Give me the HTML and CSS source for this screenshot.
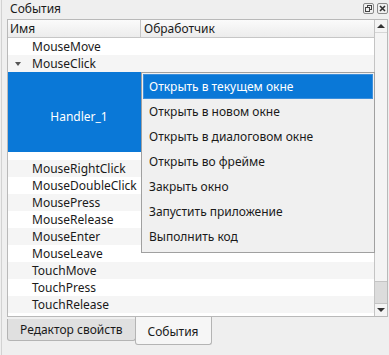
FILE: index.html
```html
<!DOCTYPE html>
<html lang="ru">
<head>
    <meta charset="UTF-8">
    <title>События</title>
    <link rel="stylesheet" href="styles.css">
</head>
<body>
    <div class="dock">
        <div class="dock-title">
            <span class="dock-caption">События</span>
            <div class="dock-buttons">
                <svg class="dock-btn" width="11" height="11" viewBox="0 0 11 11">
                    <rect x="0.5" y="0.5" width="10" height="10" rx="1.5" fill="none" stroke="#8a8a8a"/>
                    <rect x="4.5" y="2.5" width="4" height="4" fill="none" stroke="#444"/>
                    <rect x="2.5" y="4.5" width="4" height="4" fill="#efefef" stroke="#444"/>
                </svg>
                <svg class="dock-btn" width="11" height="11" viewBox="0 0 11 11">
                    <rect x="0.5" y="0.5" width="10" height="10" rx="1.5" fill="none" stroke="#8a8a8a"/>
                    <path d="M3 3 L8 8 M8 3 L3 8" stroke="#333" stroke-width="1.6"/>
                </svg>
            </div>
        </div>

        <div class="frame">
            <div class="tree">
                <div class="tree-header">
                    <div class="col-name">Имя</div>
                    <div class="col-handler">Обработчик</div>
                </div>
                <div class="row">MouseMove</div>
                <div class="row alt"><span class="arrow"></span>MouseClick</div>
                <div class="row handler-row">
                    <div class="handler-editor">Handler_1</div>
                </div>
                <div class="row alt">MouseRightClick</div>
                <div class="row">MouseDoubleClick</div>
                <div class="row alt">MousePress</div>
                <div class="row">MouseRelease</div>
                <div class="row alt">MouseEnter</div>
                <div class="row">MouseLeave</div>
                <div class="row alt">TouchMove</div>
                <div class="row">TouchPress</div>
                <div class="row alt">TouchRelease</div>
                <div class="row"></div>
            </div>
            <div class="scrollbar">
                <div class="sb-button"><span class="sb-up"></span></div>
                <div class="sb-track"><div class="sb-thumb"></div></div>
                <div class="sb-button"><span class="sb-down"></span></div>
            </div>

            <div class="menu">
                <div class="menu-item active">Открыть в текущем окне</div>
                <div class="menu-item">Открыть в новом окне</div>
                <div class="menu-item">Открыть в диалоговом окне</div>
                <div class="menu-item">Открыть во фрейме</div>
                <div class="menu-item">Закрыть окно</div>
                <div class="menu-item">Запустить приложение</div>
                <div class="menu-item">Выполнить код</div>
            </div>
        </div>

        <div class="tabs">
            <div class="tab">Редактор свойств</div>
            <div class="tab current">События</div>
        </div>
    </div>
</body>
</html>
```

FILE: styles.css
```css
body {
    margin: 0;
    padding-left: 1px;
    width: 388px;
    height: 355px;
    overflow: hidden;
    background-color: #efefef;
    font-family: "Noto Sans", sans-serif;
    font-size: 12px;
    color: #1a1a1a;
}

.dock {
    height: 355px;
    border-left: 1px solid #d2d2d2;
    padding: 0 1px 0 5px;
    display: flex;
    flex-direction: column;
}

.dock-title {
    height: 19px;
    display: flex;
    align-items: flex-start;
    justify-content: space-between;
}

.dock-caption {
    padding: 1px 0 0 3px;
    line-height: 16px;
}

.dock-buttons {
    display: flex;
    gap: 3px;
    padding-top: 3px;
}

.dock-btn {
    display: block;
}

.frame {
    position: relative;
    height: 296px;
    border: 1px solid #b9b9b9;
    background-color: white;
    display: flex;
}

.tree {
    flex: 1;
    overflow: hidden;
}

.tree-header {
    height: 17px;
    display: flex;
    background: linear-gradient(#fbfbfb, #ececec);
    border-bottom: 1px solid #c6c6c6;
    line-height: 17px;
}

.col-name {
    width: 130px;
    padding-left: 2px;
    border-right: 1px solid #c6c6c6;
}

.col-handler {
    padding-left: 3px;
}

.row {
    height: 17px;
    line-height: 17px;
    padding-left: 24px;
    background-color: white;
    position: relative;
}

.row.alt {
    background-color: #f5f5f5;
}

.arrow {
    position: absolute;
    left: 7px;
    top: 7px;
    border-left: 3px solid transparent;
    border-right: 3px solid transparent;
    border-top: 4px solid #555;
}

.handler-row {
    height: 88px;
    padding-left: 0;
}

.handler-editor {
    width: 142px;
    height: 80px;
    padding-top: 8px;
    box-sizing: border-box;
    background-color: #0a78d7;
    color: white;
    display: flex;
    align-items: center;
    justify-content: center;
}

.scrollbar {
    width: 12px;
    border-left: 1px solid #c4c4c4;
    background-color: #f4f4f4;
    display: flex;
    flex-direction: column;
}

.sb-button {
    height: 12px;
    display: flex;
    align-items: center;
    justify-content: center;
    border-bottom: 1px solid #d6d6d6;
}

.sb-button:last-child {
    border-bottom: none;
    border-top: 1px solid #c4c4c4;
}

.sb-up {
    border-left: 4px solid transparent;
    border-right: 4px solid transparent;
    border-bottom: 4px solid #333;
}

.sb-down {
    border-left: 4px solid transparent;
    border-right: 4px solid transparent;
    border-top: 4px solid #333;
}

.sb-track {
    flex: 1;
    display: flex;
    flex-direction: column;
    justify-content: flex-end;
}

.sb-thumb {
    height: 21px;
    background-color: #dcdcdc;
    border-top: 1px solid #c4c4c4;
}

.menu {
    position: absolute;
    left: 133px;
    top: 52px;
    width: 232px;
    padding: 1px 0 3px;
    background-color: #f0f0f0;
    border: 1px solid #a0a0a0;
}

.menu-item {
    height: 25px;
    line-height: 25px;
    margin: 0 1px;
    padding-left: 6px;
    color: #1a1a1a;
}

.menu-item.active {
    background-color: #0a78d7;
    color: white;
    outline: 1px solid #3c8fdc;
    outline-offset: -1px;
}

.tabs {
    display: flex;
    align-items: flex-start;
}

.tab {
    height: 21px;
    line-height: 21px;
    margin-top: 2px;
    padding: 0 12px;
    background-color: #e0e0e0;
    border: 1px solid #b4b4b4;
    border-top: none;
    border-radius: 0 0 3px 3px;
}

.tab.current {
    height: 27px;
    line-height: 29px;
    margin-top: 0;
    margin-left: -1px;
    background-color: #f6f6f6;
}
```
